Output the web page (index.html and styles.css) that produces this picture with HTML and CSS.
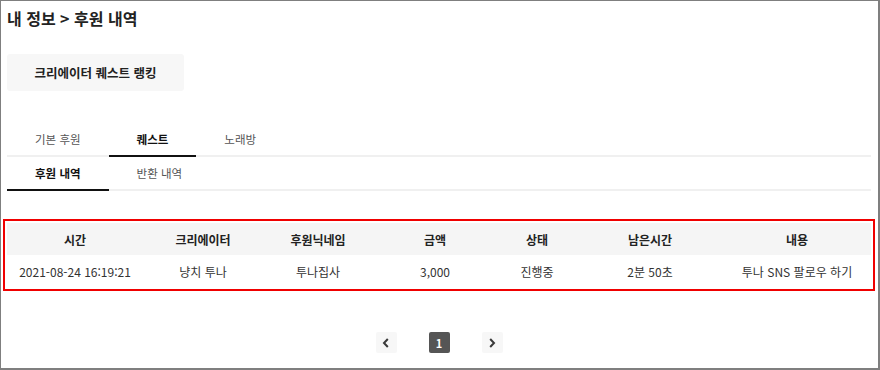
FILE: index.html
```html
<!DOCTYPE html>
<html lang="ko">
<head>
  <meta charset="UTF-8">
  <title>후원 내역</title>
  <link rel="stylesheet" href="styles.css">
</head>
<body>

<div class="frame">
  <h2 class="title">내 정보 &gt; 후원 내역</h2>

  <button class="rank-btn" type="button">크리에이터 퀘스트 랭킹</button>

  <div class="tabs">
    <a class="tab">기본 후원</a>
    <a class="tab active">퀘스트</a>
    <a class="tab">노래방</a>
  </div>
  <div class="tabs">
    <a class="tab active">후원 내역</a>
    <a class="tab">반환 내역</a>
  </div>

  <div class="table-box">
    <table class="list">
      <colgroup>
        <col style="width:136px">
        <col style="width:120px">
        <col style="width:110px">
        <col style="width:124px">
        <col style="width:80px">
        <col style="width:146px">
        <col style="width:148px">
      </colgroup>
      <thead>
        <tr>
          <th>시간</th>
          <th>크리에이터</th>
          <th>후원닉네임</th>
          <th>금액</th>
          <th>상태</th>
          <th>남은시간</th>
          <th>내용</th>
        </tr>
      </thead>
      <tbody>
        <tr>
          <td>2021-08-24 16:19:21</td>
          <td>냥치 투나</td>
          <td>투나집사</td>
          <td>3,000</td>
          <td>진행중</td>
          <td>2분 50초</td>
          <td>투나 SNS 팔로우 하기</td>
        </tr>
      </tbody>
    </table>
  </div>

  <div class="paging">
    <a class="page-btn">
      <svg width="10" height="12" viewBox="0 0 10 12"><path d="M6.8 2 L3 6 L6.8 10" fill="none" stroke="#3a3a3a" stroke-width="2"/></svg>
    </a>
    <a class="page-btn current">1</a>
    <a class="page-btn">
      <svg width="10" height="12" viewBox="0 0 10 12"><path d="M3.2 2 L7 6 L3.2 10" fill="none" stroke="#3a3a3a" stroke-width="2"/></svg>
    </a>
  </div>
</div>

</body>
</html>
```

FILE: styles.css
```css
body {
  margin: 0;
  font-family: "Noto Sans CJK KR", "Noto Sans", sans-serif;
  background: #fff;
}
.frame {
  box-sizing: border-box;
  width: 880px;
  height: 370px;
  border: 1px solid #7f7f7f;
  border-right-width: 2px;
  border-bottom-width: 2px;
  padding: 5px 7px 0 6px;
}
.title {
  margin: 0;
  font-size: 16px;
  line-height: 24px;
  font-weight: bold;
  color: #222;
}
.rank-btn {
  display: block;
  margin-top: 24px;
  width: 177px;
  height: 37px;
  padding: 0;
  border: none;
  border-radius: 3px;
  background: #f7f7f7;
  font-family: inherit;
  font-size: 12.5px;
  font-weight: bold;
  color: #222;
}
.tabs {
  display: flex;
  border-bottom: 2px solid #f0f0f0;
}
.rank-btn + .tabs {
  margin-top: 32px;
}
.tab {
  display: block;
  padding: 8px 28px;
  margin-bottom: -2px;
  border-bottom: 2px solid transparent;
  font-size: 11.5px;
  line-height: 16px;
  color: #555;
}
.tab.active {
  border-bottom-color: #111;
  color: #111;
  font-weight: bold;
}
.table-box {
  margin: 28px -4px 0;
  border: 2px solid #f00000;
  padding: 2px;
}
.list {
  width: 100%;
  table-layout: fixed;
  border-collapse: collapse;
  font-size: 12px;
  color: #333;
}
.list th {
  height: 32px;
  padding: 0;
  background: #f5f5f5;
  font-weight: bold;
  color: #222;
}
.list td {
  height: 32px;
  padding: 0;
  text-align: center;
}
.paging {
  display: flex;
  justify-content: center;
  gap: 32px;
  margin-top: 41px;
}
.page-btn {
  display: flex;
  align-items: center;
  justify-content: center;
  width: 21px;
  height: 21px;
  border-radius: 2px;
  background: #f7f7f7;
  font-size: 11px;
  font-weight: bold;
}
.page-btn.current {
  background: #555;
  color: #fff;
}
```
